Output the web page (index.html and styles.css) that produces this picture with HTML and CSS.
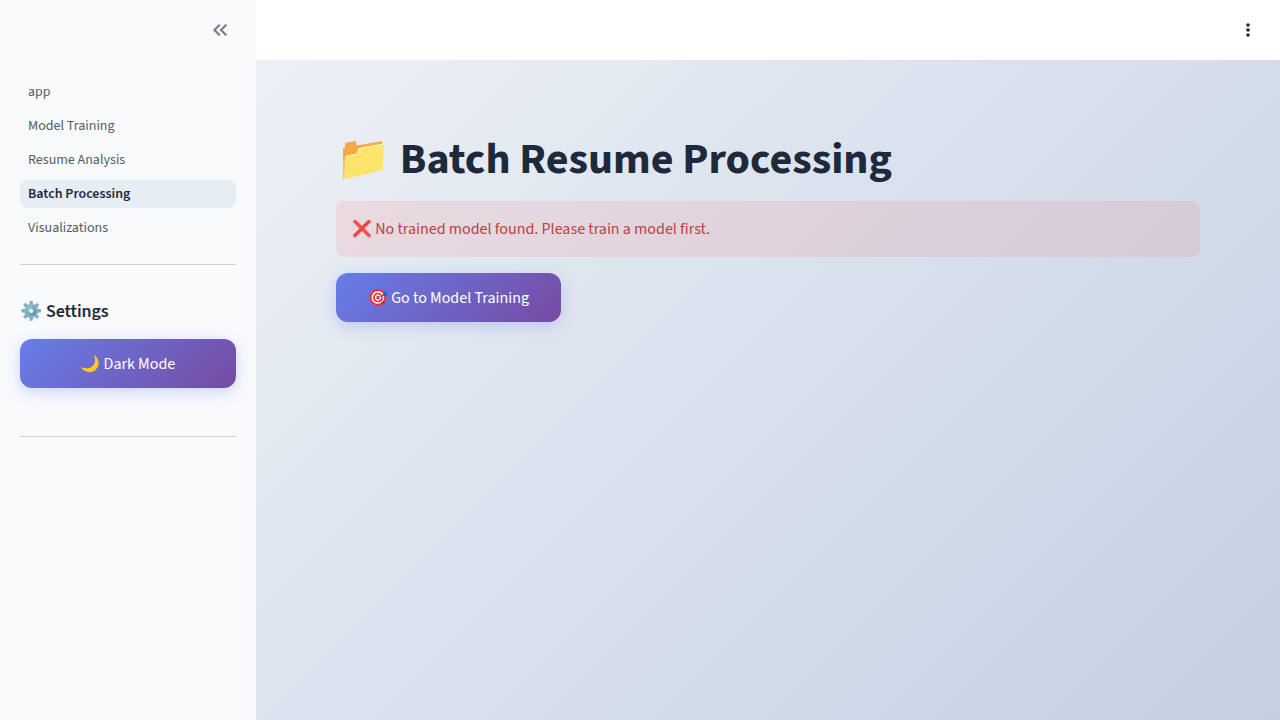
FILE: index.html
```
<!DOCTYPE html>
<html lang="en">
<head>
<meta charset="utf-8">
<title>Batch Resume Processing</title>
<link rel="stylesheet" href="styles.css">
</head>
<body>
<div class="app">
  <aside class="sidebar">
    <div class="sidebar-header">
      <svg class="collapse" viewBox="0 0 24 24"><path d="M17.59 18 19 16.59 14.42 12 19 7.41 17.59 6l-6 6zM11 18l1.41-1.41L7.83 12l4.58-4.59L11 6l-6 6z"/></svg>
    </div>
    <nav class="nav">
      <a class="link">app</a>
      <a class="link">Model Training</a>
      <a class="link">Resume Analysis</a>
      <a class="link active">Batch Processing</a>
      <a class="link">Visualizations</a>
    </nav>
    <hr class="rule">
    <h3 class="settings">⚙️ Settings</h3>
    <button class="button wide">🌙 Dark Mode</button>
    <hr class="rule last">
  </aside>
  <div class="page">
    <header class="toolbar">
      <svg class="menu" viewBox="0 0 20 20"><circle cx="10" cy="5" r="1.8"/><circle cx="10" cy="10" r="1.8"/><circle cx="10" cy="15" r="1.8"/></svg>
    </header>
    <main class="main">
      <h1 class="title">📁 Batch Resume Processing</h1>
      <div class="alert">❌ No trained model found. Please train a model first.</div>
      <button class="button">🎯 Go to Model Training</button>
    </main>
  </div>
</div>
</body>
</html>
```
FILE: styles.css
```
* { box-sizing: border-box; }
body {
  margin: 0;
  font-family: "Source Sans Pro", "Source Sans 3", "Noto Sans CJK SC", "Open Sans", sans-serif;
  color: #1e293b;
}
.app { display: flex; height: 720px; overflow: hidden; background: linear-gradient(135deg, #f5f7fa 0%, #c3cfe2 100%); }
.sidebar { width: 256px; flex: none; padding: 0 20px; background: #f8fafc; }
.sidebar-header { height: 60px; display: flex; align-items: center; justify-content: flex-end; padding-right: 4px; }
.collapse { width: 24px; height: 24px; fill: #7d7c89; stroke: #7d7c89; stroke-width: .2; }
.nav { display: flex; flex-direction: column; gap: 6px; padding-top: 18px; }
.link { height: 28px; display: flex; align-items: center; padding: 0 8px; border-radius: 8px; font-size: 14px; color: #565c68; }
.active { background: #e6edf5; color: #1e293b; font-weight: 600; }
.rule { height: 1px; margin: 22px 0 0; border: 0; background: #cccfd4; }
.settings { height: 24px; margin: 35px 0 15px; font-size: 18px; line-height: 24px; font-weight: 600; letter-spacing: -.09px; word-spacing: .5px; white-space: nowrap; }
.button {
  display: block; height: 49px; width: 225px; padding: 0; border: 0; border-radius: 12px;
  background: linear-gradient(135deg, #667eea, #764ba2);
  box-shadow: 0 4px 15px rgba(102, 126, 234, .3);
  color: #fff; font: 16px/24px "Source Sans Pro", "Source Sans 3", "Noto Sans CJK SC", "Open Sans", sans-serif;
  white-space: nowrap;
}
.wide { width: 216px; padding-right: .4px; }
.last { margin-top: 48px; }
.page { flex: 1; display: flex; flex-direction: column; }
.toolbar { height: 60px; background: #fff; display: flex; align-items: center; justify-content: flex-end; padding-right: 22px; }
.menu { width: 20px; height: 20px; fill: #262730; }
.main { flex: 1; padding: 73px 80px 0; }
.title { height: 53px; margin: 0 0 15px; font-size: 44px; line-height: 53px; font-weight: 700; letter-spacing: -.01px; white-space: nowrap; }
.alert { height: 56px; padding: 16px; margin-bottom: 16px; border-radius: 8px; background: rgba(255, 43, 43, .09); color: #bd4043; font-size: 16px; line-height: 24px; white-space: nowrap; }
```
